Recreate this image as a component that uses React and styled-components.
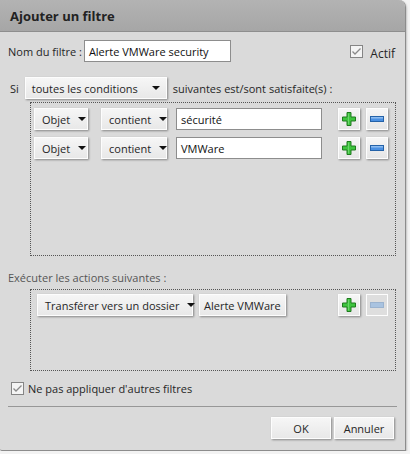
import React from 'react';
import styled, { createGlobalStyle } from 'styled-components';

const Global = createGlobalStyle`
  html, body {
    margin: 0;
    padding: 0;
    background: #f3f3f3;
  }
  body {
    font-family: "Segoe UI", "Open Sans", sans-serif;
    font-size: 11px;
    color: #262626;
  }
`;

const Dialog = styled.div`
  width: 406px;
  height: 451px;
  box-sizing: border-box;
  background: #dadada;
  border: 1px solid #8c8c8c;
  border-left: none;
  border-top: none;
  border-top-right-radius: 7px;
  border-bottom-left-radius: 2px;
  overflow: hidden;
  display: flex;
  flex-direction: column;
  box-shadow: 1px 1px 2px rgba(0, 0, 0, 0.2);
`;

const TitleBar = styled.div`
  height: 31px;
  flex: none;
  background: linear-gradient(#b3b3b3, #a6a6a6);
  border-bottom: 1px solid #8e8e8e;
  display: flex;
  align-items: center;
  padding-left: 10px;
  font-size: 13px;
  font-weight: bold;
  color: #222;
`;

const Body = styled.div`
  flex: 1;
  display: flex;
  flex-direction: column;
  padding: 8px 8px 0 8px;
`;

const Row = styled.div`
  display: flex;
  align-items: center;
  gap: ${(p) => p.$gap || 0}px;
  margin-top: ${(p) => p.$mt || 0}px;
  padding-left: ${(p) => p.$pl || 0}px;
`;

const Label = styled.span`
  color: ${(p) => (p.$muted ? '#555' : '#262626')};
  font-size: ${(p) => p.$size || 11}px;
  white-space: nowrap;
`;

const TextInput = styled.div`
  box-sizing: border-box;
  width: ${(p) => p.$w}px;
  height: 22px;
  background: #fff;
  border: 1px solid #8d8d8d;
  padding: 0 4px;
  display: flex;
  align-items: center;
  color: #111;
`;

const Spacer = styled.div`
  flex: 1;
`;

const Check = styled.span`
  box-sizing: border-box;
  width: 13px;
  height: 13px;
  background: #f4f4f4;
  border: 1px solid #858585;
  display: inline-flex;
  align-items: center;
  justify-content: center;
  flex: none;
`;

const Raised = styled.div`
  box-sizing: border-box;
  height: ${(p) => p.$h || 22}px;
  width: ${(p) => (p.$w ? `${p.$w}px` : 'auto')};
  background: linear-gradient(#f6f6f6, #e8e8e8);
  border: 1px solid #fdfdfd;
  box-shadow: 1px 1px 2px rgba(0, 0, 0, 0.38);
  display: flex;
  align-items: center;
  justify-content: ${(p) => (p.$center ? 'center' : 'space-between')};
  padding: 0 ${(p) => p.$px ?? 7}px;
  color: #262626;
  white-space: nowrap;
  flex: none;
`;

const Arrow = styled.span`
  width: 0;
  height: 0;
  border-left: 4px solid transparent;
  border-right: 4px solid transparent;
  border-top: 4px solid #111;
  margin-left: 8px;
`;

const Dotted = styled.div`
  width: 366px;
  height: ${(p) => p.$h}px;
  box-sizing: border-box;
  margin-left: 22px;
  margin-top: ${(p) => p.$mt || 0}px;
  border: 1px dotted #555;
  padding: ${(p) => p.$pt}px 7px 0 ${(p) => p.$pl}px;
  display: flex;
  flex-direction: column;
  gap: 7px;
`;

const IconBtn = styled.div`
  box-sizing: border-box;
  width: 22px;
  height: 22px;
  background: ${(p) => (p.$disabled ? '#dedede' : 'linear-gradient(#f6f6f6, #e6e6e6)')};
  border: 1px solid #fdfdfd;
  box-shadow: ${(p) => (p.$disabled ? 'none' : '1px 1px 2px rgba(0, 0, 0, 0.38)')};
  display: flex;
  align-items: center;
  justify-content: center;
  flex: none;
`;

const IconGroup = styled.div`
  display: flex;
  gap: 6px;
  margin-left: auto;
`;

const Separator = styled.div`
  height: 1px;
  background: #979797;
  margin: 10px 0 0 0;
`;

const Footer = styled.div`
  display: flex;
  justify-content: flex-end;
  gap: 3px;
  margin-top: 10px;
  padding-right: 3px;
`;

function CheckMark() {
  return (
    <svg width="11" height="11" viewBox="0 0 11 11">
      <path d="M1.5 5.5 L4 8 L9.5 2.5" fill="none" stroke="#8a8a8a" strokeWidth="1.3" />
    </svg>
  );
}

function PlusIcon() {
  return (
    <svg width="14" height="14" viewBox="0 0 14 14">
      <path
        d="M5 0.5 H9 V5 H13.5 V9 H9 V13.5 H5 V9 H0.5 V5 H5 Z"
        fill="#3ec43e"
        stroke="#1f7a1f"
        strokeWidth="1"
      />
      <rect x="6" y="1.5" width="1" height="11" fill="#8be38b" opacity="0.6" />
    </svg>
  );
}

function MinusIcon({ disabled }) {
  return (
    <svg width="14" height="6" viewBox="0 0 14 6">
      <rect
        x="0.5"
        y="0.5"
        width="13"
        height="5"
        fill={disabled ? '#a9c3e0' : '#4a90e2'}
        stroke={disabled ? '#9bb3cf' : '#2462a8'}
        strokeWidth="1"
      />
      {!disabled && <rect x="1" y="1" width="12" height="1.5" fill="#8dbcf0" />}
    </svg>
  );
}

function Select({ label, w }) {
  return (
    <Raised $w={w}>
      <span>{label}</span>
      <Arrow />
    </Raised>
  );
}

function ConditionRow({ value }) {
  return (
    <Row>
      <Select label="Objet" w={54} />
      <Row $pl={13}>
        <Select label="contient" w={66} />
      </Row>
      <Row $pl={9}>
        <TextInput $w={146}>{value}</TextInput>
      </Row>
      <IconGroup>
        <IconBtn><PlusIcon /></IconBtn>
        <IconBtn><MinusIcon /></IconBtn>
      </IconGroup>
    </Row>
  );
}

export default function App() {
  return (
    <>
      <Global />
      <Dialog>
        <TitleBar>Ajouter un filtre</TitleBar>
        <Body>
          <Row $gap={2}>
            <Label>Nom du filtre :</Label>
            <TextInput $w={147}>Alerte VMWare security</TextInput>
            <Spacer />
            <Check><CheckMark /></Check>
            <Label $size={12} style={{ marginLeft: 5, marginRight: 2, marginTop: 4 }}>Actif</Label>
          </Row>
          <Row $mt={15} $gap={6} $pl={2}>
            <Label>Si</Label>
            <Raised $w={142} $px={6}>
              <span>toutes les conditions</span>
              <Arrow />
            </Raised>
            <Label>suivantes est/sont satisfaite(s) :</Label>
          </Row>
          <Dotted $h={154} $mt={3} $pt={5} $pl={3}>
            <ConditionRow value="sécurité" />
            <ConditionRow value="VMWare" />
          </Dotted>
          <Row $mt={14}>
            <Label $muted>Exécuter les actions suivantes :</Label>
          </Row>
          <Dotted $h={82} $mt={4} $pt={4} $pl={6}>
            <Row $gap={6}>
              <Select label="Transférer vers un dossier" w={156} />
              <Raised $px={4}>Alerte VMWare</Raised>
              <IconGroup>
                <IconBtn><PlusIcon /></IconBtn>
                <IconBtn $disabled><MinusIcon disabled /></IconBtn>
              </IconGroup>
            </Row>
          </Dotted>
          <Row $mt={10} $gap={4} $pl={3}>
            <Check><CheckMark /></Check>
            <Label>Ne pas appliquer d'autres filtres</Label>
          </Row>
          <Separator />
          <Footer>
            <Raised $w={60} $h={22} $center>OK</Raised>
            <Raised $w={60} $h={22} $center>Annuler</Raised>
          </Footer>
        </Body>
      </Dialog>
    </>
  );
}
